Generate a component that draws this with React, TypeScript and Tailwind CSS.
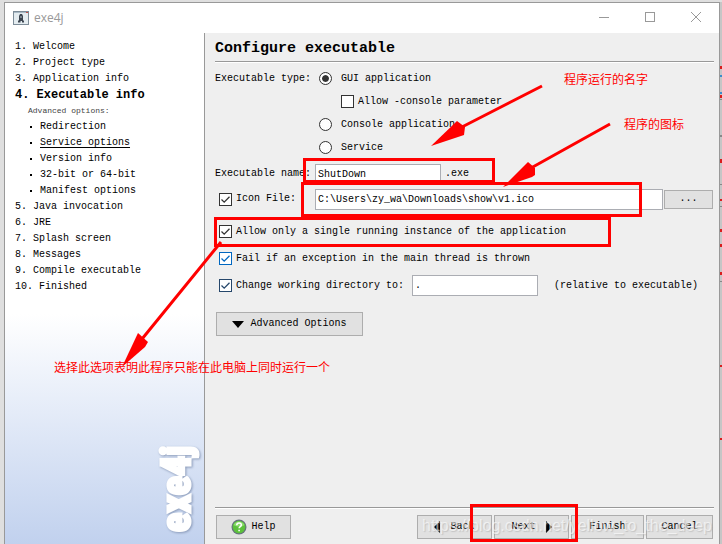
import type { ReactNode } from "react";
import clsx from "clsx";

const steps = [
  { label: "1. Welcome" },
  { label: "2. Project type" },
  { label: "3. Application info" },
  {
    label: "4. Executable info",
    active: true,
    options: [
      { label: "Redirection" },
      { label: "Service options", underlined: true },
      { label: "Version info" },
      { label: "32-bit or 64-bit" },
      { label: "Manifest options" },
    ],
  },
  { label: "5. Java invocation" },
  { label: "6. JRE" },
  { label: "7. Splash screen" },
  { label: "8. Messages" },
  { label: "9. Compile executable" },
  { label: "10. Finished" },
];

const TitleBar = () => {
  return (
    <header className="flex h-[30px] items-center bg-white text-[#999]">
      <svg className="ml-2 h-[14px] w-4" viewBox="0 0 16 14">
        <rect x="0.5" y="0.5" width="15" height="13" fill="#e4ecf0" stroke="#7d8c98" />
        <rect x="1" y="1" width="14" height="1" fill="#a9bac6" />
        <rect x="13" y="1" width="2" height="1" fill="#c0504d" />
        <path d="M5 11.5V10l1-1V5l1-2h2l1 2v4l1 1v1.5H9V10H7.500v1.500z" fill="#3b4450" />
        <path d="M7.500 5h1v2h-1z" fill="#b8c4cc" />
      </svg>
      <h1 className="ml-[5px] font-['Open_Sans',sans-serif] text-xs">exe4j</h1>
      <div className="ml-auto flex h-full">
        <button aria-label="Minimize" className="grid w-[46px] place-items-center">
          <svg className="h-3 w-3" viewBox="0 0 12 12" stroke="#999" fill="none">
            <path d="M1 5.500h10" />
          </svg>
        </button>
        <button aria-label="Maximize" className="grid w-[46px] place-items-center">
          <svg className="h-3 w-3" viewBox="0 0 12 12" stroke="#999" fill="none">
            <rect x="1.500" y="0.500" width="9" height="9" />
          </svg>
        </button>
        <button aria-label="Close" className="grid w-[46px] place-items-center">
          <svg className="h-3 w-3" viewBox="0 0 12 12" stroke="#999" fill="none">
            <path d="M1 0l10 10M11 0L1 10" />
          </svg>
        </button>
      </div>
    </header>
  );
};

const Sidebar = () => {
  return (
    <nav className="flex w-[200px] shrink-0 flex-col border-r border-[#999] bg-white bg-linear-to-b from-white from-55% to-[#c1d1ee] pt-[6px] pl-[10px]">
      <ol className="leading-4">
        {steps.map((step) => (
          <li key={step.label}>
            <div className={clsx("whitespace-pre", step.active && "text-xs leading-4 font-bold")}>
              {step.label}
            </div>
            {step.options && (
              <div className="pl-[13px]">
                <div className="text-[8px] leading-4 text-[#444]">Advanced options:</div>
                <ul>
                  {step.options.map((option) => (
                    <li key={option.label} className="flex items-center gap-2 pl-[2px]">
                      <span className="h-[2px] w-[2px] bg-black" />
                      <span className={clsx(option.underlined && "underline underline-offset-2")}>
                        {option.label}
                      </span>
                    </li>
                  ))}
                </ul>
              </div>
            )}
          </li>
        ))}
      </ol>
      <div className="mt-auto mr-1 mb-3 rotate-180 self-end font-['Liberation_Sans_Narrow','Roboto_Condensed','Open_Sans_Condensed',sans-serif] text-[40px] leading-[46px] font-bold text-white [-webkit-text-stroke:3px_white] [filter:drop-shadow(-1px_-1px_1px_#8a9ab8)] [writing-mode:vertical-rl]">
        exe4j
      </div>
    </nav>
  );
};

type CheckProps = {
  label: string;
  checked?: boolean;
  color?: string;
};

const Check = ({ label, checked = false, color = "text-[#333]" }: CheckProps) => {
  return (
    <label className="flex items-center gap-1">
      <span className={clsx("grid", color)}>
        <input
          type="checkbox"
          defaultChecked={checked}
          className="peer h-[13px] w-[13px] appearance-none border border-current bg-white [grid-area:1/1]"
        />
        <svg
          className="pointer-events-none hidden h-[13px] w-[13px] peer-checked:block [grid-area:1/1]"
          viewBox="0 0 13 13"
          fill="none"
          stroke="currentColor"
          strokeWidth="1.300"
        >
          <path d="M2.500 6.500l2.700 2.700 5.300-5.400" />
        </svg>
      </span>
      {label}
    </label>
  );
};

const Radio = ({ label, checked = false }: CheckProps) => {
  return (
    <label className="flex items-center gap-[9px]">
      <input
        type="radio"
        name="executable-type"
        defaultChecked={checked}
        className="h-[13px] w-[13px] appearance-none rounded-full border border-[#333] bg-white bg-clip-content p-[2px] shadow-[inset_0_0_0_2px_white] checked:bg-[#333]"
      />
      {label}
    </label>
  );
};

const Button = ({ className, children }: { className?: string; children: ReactNode }) => {
  return (
    <button
      className={clsx(
        "flex h-6 items-center justify-center border border-[#adadad] bg-[#e1e1e1]",
        className
      )}
    >
      {children}
    </button>
  );
};

const field = "h-[21px] border border-[#abadb3] bg-white px-[2px] outline-none";

const SettingsForm = () => {
  return (
    <div className="pt-1">
      <div className="flex">
        <span className="w-[104px] leading-[23px]">Executable type:</span>
        <div className="*:h-[23px]">
          <Radio label="GUI application" checked />
          <div className="flex pl-[22px]">
            <Check label="Allow -console parameter" />
          </div>
          <Radio label="Console application" />
          <Radio label="Service" />
        </div>
      </div>
      <div className="flex h-7 items-center pt-[2px]">
        <label htmlFor="exe-name" className="w-[100px]">
          Executable name:
        </label>
        <input id="exe-name" defaultValue="ShutDown" className={clsx(field, "w-[126px]")} />
        <span className="ml-1">.exe</span>
      </div>
      <div className="flex h-6 items-center pr-px pl-1">
        <div className="w-[96px] shrink-0">
          <Check label="Icon File:" checked />
        </div>
        <input
          aria-label="Icon file path"
          defaultValue="C:\Users\zy_wa\Downloads\show\v1.ico"
          className={clsx(field, "min-w-0 flex-1")}
        />
        <Button className="ml-px h-[19px] w-[49px]">...</Button>
      </div>
      <div className="mt-[7px] pl-1 *:h-[27px]">
        <Check label="Allow only a single running instance of the application" checked />
        <Check
          label="Fail if an exception in the main thread is thrown"
          checked
          color="text-[#0067c0]"
        />
        <div className="flex items-center">
          <Check label="Change working directory to:" checked color="text-[#26476b]" />
          <input
            aria-label="Working directory"
            defaultValue="."
            className={clsx(field, "ml-2 w-[126px]")}
          />
          <span className="ml-4">(relative to executable)</span>
        </div>
      </div>
      <Button className="mt-[13px] ml-px w-[147px] gap-[6px]">
        <svg className="h-[7px] w-3" viewBox="0 0 12 7">
          <path d="M0 0h12L6 7z" />
        </svg>
        Advanced Options
      </Button>
    </div>
  );
};

const Footer = () => {
  return (
    <footer className="mt-auto border-t border-[#999]">
      <div className="relative flex gap-[2px] border-t border-white pt-[6px] pb-[5px]">
        <Button className="mr-auto ml-px w-[75px] gap-1">
          <svg className="h-4 w-4" viewBox="0 0 16 16">
            <circle cx="8" cy="8" r="7.500" fill="#66727c" />
            <circle cx="8" cy="8" r="6.300" fill="#5cc13c" />
            <path d="M2.500 6a6 6 0 0 1 11 0c-3 2-7 2-11 0z" fill="#8bdd6c" />
            <path
              d="M5.800 6.200c0-3 4.500-2.800 4.500-.3 0 1.600-2.200 1.700-2.200 3.400M8.100 10.700v1.600"
              fill="none"
              stroke="#fff"
              strokeWidth="1.600"
            />
          </svg>
          Help
        </Button>
        <Button className="w-[75px] gap-[10px]">
          <svg className="h-3 w-[6px]" viewBox="0 0 6 12">
            <path d="M6 0v12L0 6z" />
          </svg>
          Back
        </Button>
        <Button className="w-[75px] gap-[10px]">
          Next
          <svg className="h-3 w-[6px]" viewBox="0 0 6 12">
            <path d="M0 0v12l6-6z" />
          </svg>
        </Button>
        <Button className="w-[73px]">Finish</Button>
        <Button className="mr-px w-[67px]">Cancel</Button>
        <div className="pointer-events-none absolute right-[2px] bottom-[6px] font-['Liberation_Sans',sans-serif] text-base leading-6 text-white/60 [text-shadow:1px_1px_1px_#9996]">
          https://blog.csdn.net/yellow_to_the_deep
        </div>
      </div>
    </footer>
  );
};

// Red boxes, arrows and notes drawn over the dialog
const Annotations = () => {
  return (
    <div className="pointer-events-none absolute top-0 left-0 font-['Noto_Sans_CJK_SC',sans-serif] text-xs leading-4 whitespace-nowrap text-[#f00]">
      <svg width="722" height="544" viewBox="0 0 722 544" fill="none" stroke="#f00" strokeWidth="3">
        <rect x="304.500" y="159.500" width="189" height="22" />
        <rect x="302.500" y="183.500" width="338" height="32" />
        <rect x="215.500" y="218.500" width="394" height="27" />
        <rect x="471.500" y="505.500" width="105" height="35" />
        <path d="M542 86L460 128M610 124L531 168M221 242L142 339" />
        <g fill="#f00" stroke="none">
          <path d="M431 146l26-25 8 6-1 8z" />
          <path d="M503 187l25-25 7 6v7l-3 2z" />
          <path d="M122 367l16-34 10 9-3 5z" />
        </g>
      </svg>
      <span className="absolute top-[71px] left-[564px]">程序运行的名字</span>
      <span className="absolute top-[116px] left-[624px]">程序的图标</span>
      <span className="absolute top-[359px] left-[54px]">
        选择此选项表明此程序只能在此电脑上同时运行一个
      </span>
    </div>
  );
};

// Sliver of the window behind the dialog
const Backdrop = () => {
  return (
    <svg className="w-[2px] shrink-0 bg-[#c6c6c6]" viewBox="0 0 2 542" preserveAspectRatio="xMinYMin">
      <path
        d="M1 64v3M1 93v3M1 157v4M1 197v2M1 227v3M1 242v3M1 270v3M1 363v2M1 436v2"
        stroke="#d81e1e"
        strokeWidth="2"
      />
      <path d="M1 73v2M1 90v2" stroke="#3c8ccc" strokeWidth="2" />
      <path d="M1 97v1M1 133v2M1 182v1M1 204v1M1 279v1" stroke="#888" strokeWidth="2" />
    </svg>
  );
};

const App = () => {
  return (
    <div className="relative flex min-h-screen bg-[#dfdfdf] pt-[2px] pl-1 font-['Liberation_Mono',monospace] text-[10px] leading-4 text-black">
      <div className="flex min-w-0 flex-1 flex-col border-x border-t border-[#999] bg-[#efefef]">
        <TitleBar />
        <div className="flex flex-1">
          <Sidebar />
          <main className="flex min-w-0 flex-1 flex-col pr-[5px] pl-[10px]">
            <h2 className="border-b border-[#999] pt-1 text-[15px] leading-6 font-bold">
              Configure executable
            </h2>
            <div className="border-t border-white">
              <SettingsForm />
            </div>
            <Footer />
          </main>
        </div>
      </div>
      <Backdrop />
      <Annotations />
    </div>
  );
};

export default App;
